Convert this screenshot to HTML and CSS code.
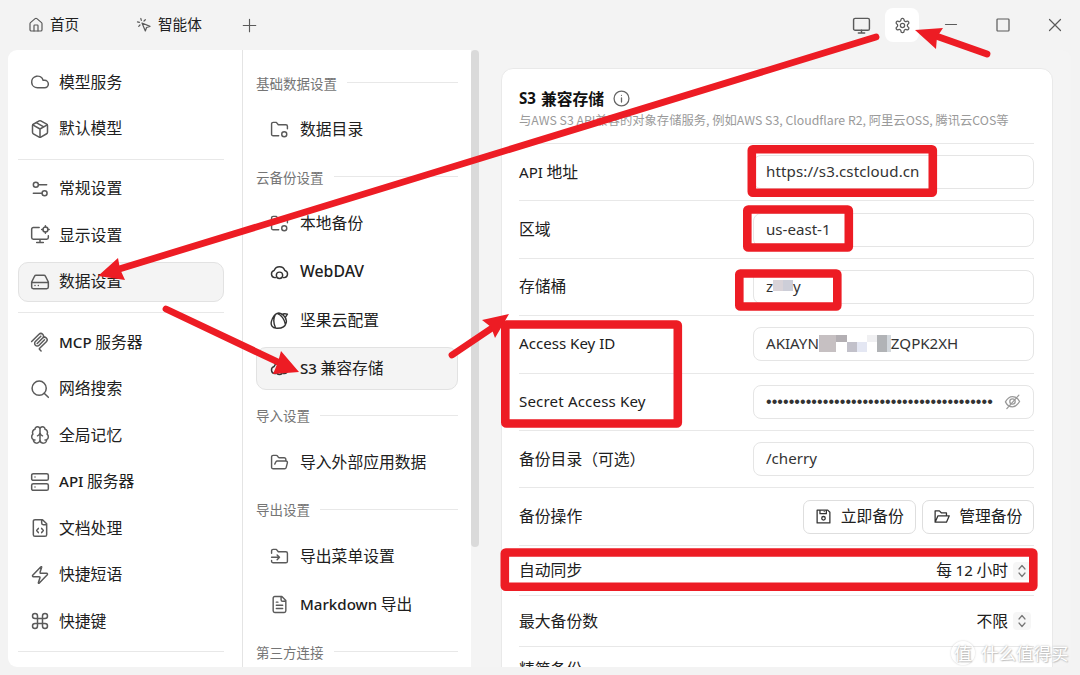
FILE: index.html
```html
<!DOCTYPE html>
<html lang="zh-CN">

<head>
  <meta charset="UTF-8">
  <meta name="viewport" content="width=device-width, initial-scale=1.0">
  <title>数据设置</title>
  <link rel="stylesheet" href="styles.css">
</head>

<body>
  <!-- 标题栏 -->
  <header class="titlebar">
    <div class="tab tab-home">
      <svg viewBox="0 0 24 24"><path d="M15 21v-8a1 1 0 0 0-1-1h-4a1 1 0 0 0-1 1v8"/><path d="M3 10a2 2 0 0 1 .7-1.5l7-6a2 2 0 0 1 2.6 0l7 6A2 2 0 0 1 21 10v9a2 2 0 0 1-2 2H5a2 2 0 0 1-2-2z"/></svg>
      <span>首页</span>
    </div>
    <div class="tab tab-agent">
      <svg viewBox="0 0 24 24"><path d="M9 9l5 12 1.8-5.2L21 14Z"/><path d="M7.2 2.2 8 5.1M5.1 8l-2.9-.8M14 4.1 12 6M6 12l-1.9 2"/></svg>
      <span>智能体</span>
    </div>
    <svg class="add" viewBox="0 0 24 24"><path d="M2 12h20M12 2v20"/></svg>
    <div class="window-tools">
      <svg class="monitor" viewBox="0 0 24 24"><rect x="2" y="3" width="20" height="15" rx="2"/><path d="M8 21.5h8M12 18v3.5"/></svg>
      <div class="gear">
        <svg viewBox="0 0 24 24"><path d="M12.22 2h-.44a2 2 0 0 0-2 2v.18a2 2 0 0 1-1 1.73l-.43.25a2 2 0 0 1-2 0l-.15-.08a2 2 0 0 0-2.73.73l-.22.38a2 2 0 0 0 .73 2.73l.15.1a2 2 0 0 1 1 1.72v.51a2 2 0 0 1-1 1.74l-.15.09a2 2 0 0 0-.73 2.73l.22.38a2 2 0 0 0 2.73.73l.15-.08a2 2 0 0 1 2 0l.43.25a2 2 0 0 1 1 1.73V20a2 2 0 0 0 2 2h.44a2 2 0 0 0 2-2v-.18a2 2 0 0 1 1-1.73l.43-.25a2 2 0 0 1 2 0l.15.08a2 2 0 0 0 2.73-.73l.22-.39a2 2 0 0 0-.73-2.73l-.15-.08a2 2 0 0 1-1-1.74v-.5a2 2 0 0 1 1-1.74l.15-.09a2 2 0 0 0 .73-2.73l-.22-.38a2 2 0 0 0-2.73-.73l-.15.08a2 2 0 0 1-2 0l-.43-.25a2 2 0 0 1-1-1.73V4a2 2 0 0 0-2-2z"/><circle cx="12" cy="12" r="3"/></svg>
      </div>
      <svg class="win min" viewBox="0 0 14 14"><path d="M1.5 6.5h11"/></svg>
      <svg class="win max" viewBox="0 0 14 14"><rect x="1" y="1" width="12" height="12" rx="0.8"/></svg>
      <svg class="win close" viewBox="0 0 14 14"><path d="M1.5 1.5l11 11M12.5 1.5l-11 11"/></svg>
    </div>
  </header>

  <main class="content">
    <!-- 左侧设置菜单 -->
    <nav class="menu">
      <div class="item"><svg viewBox="0 0 24 24"><path d="M17.5 19H9a7 7 0 1 1 6.71-9h1.79a4.5 4.5 0 1 1 0 9Z"/></svg><span>模型服务</span></div>
      <div class="item"><svg viewBox="0 0 24 24"><path d="M21 8a2 2 0 0 0-1-1.73l-7-4a2 2 0 0 0-2 0l-7 4A2 2 0 0 0 3 8v8a2 2 0 0 0 1 1.73l7 4a2 2 0 0 0 2 0l7-4A2 2 0 0 0 21 16Z"/><path d="m3.3 7 8.7 5 8.7-5M12 22V12M7.5 4.3l9 5.1"/></svg><span>默认模型</span></div>
      <hr>
      <div class="item"><svg viewBox="0 0 24 24"><path d="M10.500 7H20M14 17H4"/><circle cx="17.500" cy="17" r="3"/><circle cx="7" cy="7" r="3"/></svg><span>常规设置</span></div>
      <div class="item"><svg viewBox="0 0 24 24"><path d="M12 17v4M8 21h8M11 3H4a2 2 0 0 0-2 2v10a2 2 0 0 0 2 2h16a2 2 0 0 0 2-2v-2"/><circle cx="18.500" cy="5.500" r="3"/><path d="M18.500 1v1.500M18.500 8.500v1.500M14 5.500h1.500M21.500 5.500H23"/></svg><span>显示设置</span></div>
      <div class="item active"><svg viewBox="0 0 24 24"><path d="M22 12.500H2M5.450 5.110 2 12v6a2 2 0 0 0 2 2h16a2 2 0 0 0 2-2v-6l-3.450-6.890A2 2 0 0 0 16.760 4H7.240a2 2 0 0 0-1.790 1.110zM6 16.300h.01M10 16.300h.01"/></svg><span>数据设置</span></div>
      <hr>
      <div class="item"><svg viewBox="0 0 24 24"><path d="M2 11.500 10.800 2.800a3.100 3.100 0 0 1 4.400 4.400L8.600 13.800M8.700 13.700l6.500-6.500a3.100 3.100 0 0 1 4.400 4.400l-8 8a1 1 0 0 0 0 1.400L13.300 22.700M13 5 6.500 11.500a3.100 3.100 0 0 0 4.400 4.400l6.500-6.500"/></svg><span><b class="en">MCP</b> 服务器</span></div>
      <div class="item"><svg viewBox="0 0 24 24"><circle cx="11" cy="11" r="8.500"/><path d="m22 22-5-5"/></svg><span>网络搜索</span></div>
      <div class="item"><svg viewBox="0 0 24 24"><path d="M12 5a3 3 0 1 0-6 .1 4 4 0 0 0-2.500 5.800 4 4 0 0 0 .5 6.600A4 4 0 1 0 12 18ZM12 5a3 3 0 1 1 6 .1 4 4 0 0 1 2.500 5.800 4 4 0 0 1-.5 6.600A4 4 0 1 1 12 18ZM15 13a4.500 4.500 0 0 1-3-4 4.500 4.500 0 0 1-3 4M6 18a4 4 0 0 1-2-.5M20 17.500a4 4 0 0 1-2 .5"/></svg><span>全局记忆</span></div>
      <div class="item"><svg viewBox="0 0 24 24"><rect x="2" y="2" width="20" height="8" rx="2"/><rect x="2" y="14" width="20" height="8" rx="2"/><path d="M6 6h.01M6 18h.01"/></svg><span><b class="en">API</b> 服务器</span></div>
      <div class="item"><svg viewBox="0 0 24 24"><path d="M15 2H6a2 2 0 0 0-2 2v16a2 2 0 0 0 2 2h12a2 2 0 0 0 2-2V7ZM14 2v4a2 2 0 0 0 2 2h4M10 12.500 8 15l2 2.500M14 12.500l2 2.500-2 2.500"/></svg><span>文档处理</span></div>
      <div class="item"><svg viewBox="0 0 24 24"><path d="M4 14a1 1 0 0 1-.78-1.630l9.900-10.200a.5.5 0 0 1 .86.46l-1.920 6.020A1 1 0 0 0 13 10h7a1 1 0 0 1 .78 1.630l-9.900 10.200a.5.5 0 0 1-.86-.46l1.920-6.020A1 1 0 0 0 11 14z"/></svg><span>快捷短语</span></div>
      <div class="item"><svg viewBox="0 0 24 24"><path d="M15 6v12a3 3 0 1 0 3-3H6a3 3 0 1 0 3 3V6a3 3 0 1 0-3 3h12a3 3 0 1 0-3-3"/></svg><span>快捷键</span></div>
      <hr>
    </nav>

    <!-- 数据设置子菜单 -->
    <nav class="submenu">
      <div class="group">基础数据设置</div>
      <div class="item"><svg viewBox="0 0 24 24"><path d="M11 20H4a2 2 0 0 1-2-2V5a2 2 0 0 1 2-2h4l2.500 3H20a2 2 0 0 1 2 2v3"/><circle cx="18" cy="18" r="3.200"/></svg><span>数据目录</span></div>
      <div class="group">云备份设置</div>
      <div class="item"><svg viewBox="0 0 24 24"><path d="M11 20H4a2 2 0 0 1-2-2V5a2 2 0 0 1 2-2h4l2.500 3H20a2 2 0 0 1 2 2v3"/><circle cx="18" cy="18" r="3.200"/></svg><span>本地备份</span></div>
      <div class="item dark"><svg viewBox="0 0 24 24"><path d="M7 18.500H6a4.600 4.600 0 0 1-.8-9 7.200 7.200 0 0 1 13.600 0 4.600 4.600 0 0 1-.8 9h-1"/><circle cx="12" cy="15.500" r="4"/></svg><span class="en webdav">WebDAV</span></div>
      <div class="item dark"><svg viewBox="0 0 24 24"><path d="M9 3C14 1 22 8 20.500 14.500 19 21 13 22 8.500 21.800 2 21.500.5 17 2 12.500 3.500 8 5.500 4.500 9 3ZM9 3c5 2 9 7 10.500 14M6.500 5C4 10 4.500 16 7 21.500M15 4.500c2-1.500 4-1.500 7-.5l-2 3"/></svg><span>坚果云配置</span></div>
      <div class="item dark active"><svg viewBox="0 0 24 24"><path d="M7 18.500H6a4.600 4.600 0 0 1-.8-9 7.200 7.200 0 0 1 13.600 0 4.600 4.600 0 0 1-.8 9h-1"/><circle cx="12" cy="15.500" r="4"/></svg><span><span class="en">S3</span> 兼容存储</span></div>
      <div class="group">导入设置</div>
      <div class="item"><svg viewBox="0 0 24 24"><path d="m6 14 1.500-2.900A2 2 0 0 1 9.240 10H20a2 2 0 0 1 1.940 2.500l-1.540 6a2 2 0 0 1-1.950 1.500H4a2 2 0 0 1-2-2V5a2 2 0 0 1 2-2h3.900a2 2 0 0 1 1.690.9l.81 1.200a2 2 0 0 0 1.670.9H18a2 2 0 0 1 2 2v2"/></svg><span>导入外部应用数据</span></div>
      <div class="group">导出设置</div>
      <div class="item"><svg viewBox="0 0 24 24"><path d="M2 8V5a2 2 0 0 1 2-2h4l2.500 3H20a2 2 0 0 1 2 2v10a2 2 0 0 1-2 2H4a2 2 0 0 1-2-2v-1M2 13h10M9 10l3 3-3 3"/></svg><span>导出菜单设置</span></div>
      <div class="item"><svg viewBox="0 0 24 24"><path d="M15 2H6a2 2 0 0 0-2 2v16a2 2 0 0 0 2 2h12a2 2 0 0 0 2-2V7ZM14 2v4a2 2 0 0 0 2 2h4M10 9H8M16 13H8M16 17H8"/></svg><span><span class="en">Markdown</span> 导出</span></div>
      <div class="group">第三方连接</div>
    </nav>
    <div class="scrollbar"></div>

    <!-- S3 表单 -->
    <section class="card">
      <div class="head">
        <h1><span class="en">S3</span> 兼容存储 <svg viewBox="0 0 24 24"><circle cx="12" cy="12" r="10.500"/><path d="M12 17v-6M12 7.500h.01"/></svg></h1>
        <p>与<i>AWS S3 API</i>兼容的对象存储服务, 例如<i>AWS S3, Cloudflare R2, </i>阿里云<i>OSS, </i>腾讯云<i>COS</i>等</p>
      </div>
      <div class="row"><label><span class="en">API</span> 地址</label><div class="input en url">https://s3.cstcloud.cn</div></div>
      <div class="row"><label>区域</label><div class="input en">us-east-1</div></div>
      <div class="row"><label>存储桶</label><div class="input en">z<svg class="mask mask-s" viewBox="0 0 20 11"><path fill="#d9d3d8" d="M0 0h10v11H0z"/><path fill="#cdced8" d="M10 0h10v11H10z"/></svg>y</div></div>
      <div class="row"><label class="en">Access Key ID</label><div class="input en key">AKIAYN<svg class="mask" viewBox="0 0 72 17" shape-rendering="crispEdges"><path fill="#c6c0c2" d="M0 0h17v17H0z"/><path fill="#b3afb3" d="M17 0h11v7H17z"/><path fill="#c2c1ca" d="M28 7h10v10H28z"/><path fill="#e4e7f3" d="M38 7h10v10H38z"/><path fill="#f0f0f2" d="M48 0h10v7H48z"/><path fill="#b1b3b6" d="M58 0h10v17H58z"/><path fill="#d3d8dd" d="M68 0h4v17h-4z"/></svg>ZQPK2XH</div></div>
      <div class="row"><label class="en secret">Secret Access Key</label><div class="input"><span class="dots">••••••••••••••••••••••••••••••••••••••••</span><svg class="eye" viewBox="0 0 24 24"><path d="M2 12.500C5 7 8 5 12 5s7.500 2 10 7c-3 5-6 7.500-10 7.500s-7.500-2-10-7ZM21 3 4 22"/><circle cx="12" cy="12" r="3.800"/></svg></div></div>
      <div class="row"><label>备份目录（可选）</label><div class="input en">/cherry</div></div>
      <div class="row"><label>备份操作</label>
        <div class="buttons">
          <button><svg viewBox="0 0 24 24"><path d="M3 3h15l3 3v15H3ZM7 3v5h9V3M13 5h.01"/><circle cx="12" cy="14.500" r="2.500"/></svg><span>立即备份</span></button>
          <button><svg viewBox="0 0 24 24"><path d="M3 20V4h6l3 3h7v4M3 20l4-9h16l-4 9Z"/></svg><span>管理备份</span></button>
        </div>
      </div>
      <div class="row short"><label>自动同步</label><div class="select"><span>每 <span class="en">12</span> 小时</span><svg viewBox="0 0 12 18"><path d="M3 7l3-3.500L9 7M3 11l3 3.500L9 11"/></svg></div></div>
      <div class="row short"><label>最大备份数</label><div class="select"><span>不限</span><svg viewBox="0 0 12 18"><path d="M3 7l3-3.500L9 7M3 11l3 3.500L9 11"/></svg></div></div>
      <div class="row short last"><label>精简备份</label></div>
    </section>
  </main>

  <!-- 标注 -->
  <svg class="marks" viewBox="0 0 1080 675">
    <g class="line">
      <path d="M876 37 116 270"/>
      <path d="M166 309 280 363"/>
      <path d="M452 355 495 326"/>
      <path d="M987 54 936 36"/>
    </g>
    <g class="tip">
      <path d="M98 276 118 258 120 269 125 280Z"/>
      <path d="M299 372 281 351 278 362 273 374Z"/>
      <path d="M509 314 482 320 491 327 495 338Z"/>
      <path d="M915 30 943 28 937 37 936 49Z"/>
    </g>
    <g class="box">
      <rect x="751.800" y="149.300" width="181" height="43.500" rx="1"/>
      <rect x="747.300" y="209.500" width="101.500" height="38" rx="1"/>
      <rect x="739.300" y="273.500" width="98" height="33" rx="1"/>
      <rect x="505.300" y="324.500" width="172.500" height="99" rx="1"/>
      <rect x="504.800" y="552.500" width="528.500" height="34.300" rx="1"/>
    </g>
  </svg>
  <div class="watermark"><span class="logo">值</span>什么值得买</div>
</body>

</html>
```

FILE: styles.css
```css
* {
  box-sizing: border-box;
}

body {
  margin: 0;
  width: 1080px;
  height: 675px;
  overflow: hidden;
  display: flex;
  flex-direction: column;
  background-color: #f3f3f3;
  color: #202020;
  font-family: "Noto Sans CJK SC", sans-serif;
  font-size: 15.8px;
}

svg {
  flex: none;
  fill: none;
  stroke: #5a5a5a;
  stroke-width: 1.8;
  stroke-linecap: round;
  stroke-linejoin: round;
}

.en {
  font-family: "Noto Sans", "Noto Sans CJK SC", sans-serif;
  font-size: 15.1px;
}

/* 标题栏 */
.titlebar {
  flex: none;
  height: 50px;
  padding-left: 28px;
  display: flex;
  align-items: center;
  font-size: 14.6px;
}

.tab {
  display: flex;
  align-items: center;
  gap: 6px;
}

.tab span {
  padding-bottom: 3px;
}

.tab svg {
  width: 16px;
  height: 16px;
}

.tab-home {
  width: 108px;
}

.tab-agent {
  width: 106px;
}

.titlebar .add {
  width: 15px;
  height: 15px;
}

.window-tools {
  margin-left: auto;
  padding-right: 18px;
  display: flex;
  align-items: center;
}

.window-tools .monitor {
  width: 19px;
  height: 19px;
  margin-right: 14px;
}

.gear {
  width: 34px;
  height: 34px;
  margin-right: 1px;
  border-radius: 8px;
  background-color: #fff;
  display: flex;
  align-items: center;
  justify-content: center;
}

.gear svg {
  width: 17px;
  height: 17px;
}

.win {
  width: 14px;
  height: 14px;
  stroke-width: 1.2;
}

.min {
  margin-left: 24px;
}

.max,
.close {
  margin-left: 38px;
}

/* 主体 */
.content {
  height: 617px;
  margin: 0 9px 0 8px;
  display: flex;
  overflow: hidden;
  border-radius: 9px;
  background-color: #f4f4f4;
}

.menu {
  width: 235px;
  flex: none;
  display: flex;
  flex-direction: column;
  padding: 12px 18px 0 10px;
  border-right: 1px solid #e4e4e4;
  background-color: #fff;
}

.menu .item {
  flex: none;
  height: 40.6px;
  margin-bottom: 5.9px;
  padding-left: 11px;
  gap: 9px;
}

.item {
  display: flex;
  align-items: center;
  border: 1px solid transparent;
  border-radius: 10px;
  white-space: nowrap;
}

.item > span {
  padding-bottom: 2px;
}

.item.active {
  background-color: #f4f4f4;
  border-color: #e2e2e2;
}

.item svg {
  width: 20px;
  height: 20px;
}

.item b,
.submenu .en {
  font-weight: 500;
}

.menu hr {
  width: 100%;
  height: 1px;
  flex: none;
  margin: 3.7px 0 9px;
  border: 0;
  background-color: #e8e8e8;
}

.submenu {
  width: 228px;
  flex: none;
  padding: 13px 13px 0 13px;
  background-color: #fff;
}

.group {
  height: 39.8px;
  margin-bottom: 6px;
  display: flex;
  align-items: center;
  gap: 10px;
  font-size: 13.5px;
  color: #757575;
  white-space: nowrap;
}

.group::after {
  content: "";
  flex: 1;
  height: 1px;
  background-color: #e8e8e8;
}

.submenu .item {
  height: 42.2px;
  margin-bottom: 6px;
  padding-left: 13px;
  gap: 11px;
}

.submenu .item svg {
  width: 19px;
  height: 19px;
}

.submenu .dark svg {
  stroke: #333;
}

.submenu .webdav {
  font-size: 15.8px;
}

.scrollbar {
  width: 8px;
  height: 497px;
  flex: none;
  background-color: #dadada;
  border-radius: 4px;
}

/* 表单 */
.card {
  width: 552px;
  height: 640px;
  flex: none;
  margin: 18px 0 0 22px;
  padding: 0 18px 0 17px;
  border: 1px solid #e9e9e9;
  border-radius: 12px;
  background-color: #fff;
}

.head {
  height: 75px;
  padding-top: 16px;
  border-bottom: 1px solid #e8e8e8;
}

.head h1 {
  margin: 0;
  height: 26px;
  display: flex;
  align-items: center;
  gap: 5px;
  font-size: 15.8px;
  color: #111;
}

.head h1 svg {
  width: 17px;
  height: 17px;
  margin-left: 4px;
  stroke: #666;
}

.head p {
  margin: 0;
  font-size: 12.3px;
  line-height: 18px;
  color: #9a9a9a;
  white-space: nowrap;
}

.head i {
  font-style: normal;
}

.row {
  height: 57.4px;
  display: flex;
  align-items: center;
  justify-content: space-between;
  border-bottom: 1px solid #e8e8e8;
}

.row label,
.buttons span,
.select > span {
  padding-bottom: 2px;
}

.row .secret {
  letter-spacing: 0.15px;
}

.row.short {
  height: 50.6px;
}

.row.last {
  height: 46px;
}

.input {
  width: 281px;
  height: 34px;
  padding: 0 12px 2px;
  display: flex;
  align-items: center;
  border: 1px solid #e5e5e5;
  border-radius: 8px;
  color: #333;
}

.url {
  letter-spacing: 0.1px;
}

.mask {
  width: 72px;
  height: 17px;
  stroke: none;
}

.mask-s {
  width: 20px;
  height: 11px;
}

.dots {
  font-family: "Liberation Sans", sans-serif;
  font-size: 16px;
  letter-spacing: 0.07px;
  padding-top: 2px;
}

.eye {
  width: 17px;
  height: 17px;
  margin: 2px 0 0 auto;
  stroke: #999;
}

.buttons {
  display: flex;
  gap: 6px;
}

.buttons button {
  width: 112.5px;
  height: 34px;
  padding: 0;
  display: flex;
  align-items: center;
  justify-content: center;
  gap: 9px;
  border: 1px solid #dedede;
  border-radius: 7px;
  background-color: #fff;
  color: #202020;
  font-family: inherit;
  font-size: 15.8px;
}

.buttons svg {
  width: 17px;
  height: 17px;
  stroke: #333;
}

.select {
  display: flex;
  align-items: center;
  gap: 4px;
}

.select svg {
  width: 18px;
  height: 18px;
  margin: 0 3px 0 1px;
  border-radius: 4px;
  background-color: #f6f6f6;
  stroke: #777;
  stroke-width: 1.2;
}

/* 红色标注 */
.marks {
  position: absolute;
  left: 0;
  top: 0;
  width: 1080px;
  height: 675px;
  pointer-events: none;
  stroke: none;
}

.marks .line {
  stroke: #ed1c24;
  stroke-width: 6.8;
}

.marks .tip {
  fill: #ed1c24;
}

.marks .box {
  stroke: #ed1c24;
  stroke-width: 8.6;
}

.watermark {
  position: absolute;
  left: 951px;
  top: 640px;
  display: flex;
  align-items: center;
  gap: 6px;
  font-size: 17.5px;
  line-height: 26px;
  color: #fff;
  text-shadow: 0 0 2px #aaa, 1px 1px 1px #ccc;
  white-space: nowrap;
}

.watermark .logo {
  width: 24px;
  height: 24px;
  line-height: 22px;
  text-align: center;
  border-radius: 50%;
  border: 1px solid #fff;
  box-shadow: 0 0 2px #ccc;
}
```
